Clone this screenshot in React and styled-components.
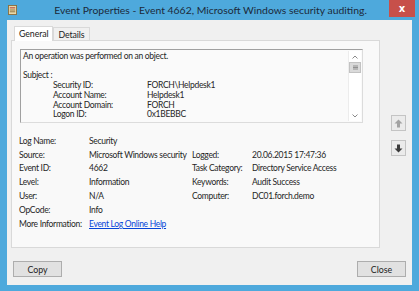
import React from 'react';
import styled, { createGlobalStyle } from 'styled-components';

const GlobalStyle = createGlobalStyle`
  html, body { margin: 0; padding: 0; background: #4ea9dc; }
  body { font-family: Lato, "Noto Sans", sans-serif; }
`;

const summary = [
  ['Security ID:', 'FORCH\\Helpdesk1'],
  ['Account Name:', 'Helpdesk1'],
  ['Account Domain:', 'FORCH'],
  ['Logon ID:', '0x1BEBBC'],
];

const fields = [
  ['Log Name:', 'Security', '', ''],
  ['Source:', 'Microsoft Windows security', 'Logged:', '20.06.2015 17:47:36'],
  ['Event ID:', '4662', 'Task Category:', 'Directory Service Access'],
  ['Level:', 'Information', 'Keywords:', 'Audit Success'],
  ['User:', 'N/A', 'Computer:', 'DC01.forch.demo'],
  ['OpCode:', 'Info', '', ''],
];

function App() {
  return (
    <Frame>
      <GlobalStyle />
      <TitleBar>
        <AppIcon viewBox="0 0 10 11">
          <rect x="0.5" y="0.5" width="9" height="10" fill="#e9d9a8" stroke="#8a6d3b" />
          <rect x="2" y="2.5" width="6" height="1.2" fill="#b2473e" />
          <rect x="2" y="5" width="6" height="1" fill="#8a6d3b" />
          <rect x="2" y="7" width="6" height="1" fill="#8a6d3b" />
        </AppIcon>
        <Title>Event Properties - Event 4662, Microsoft Windows security auditing.</Title>
        <CloseX>x</CloseX>
      </TitleBar>
      <Body>
        <Main>
          <TabArea>
            <Tabs>
              <Tab active>General</Tab>
              <Tab>Details</Tab>
            </Tabs>
            <Panel>
              <TextBox>
                <TextLines>
                  <Line>An operation was performed on an object.</Line>
                  <Line>&nbsp;</Line>
                  <Line>Subject :</Line>
                  {summary.map(([k, v]) => (
                    <SubRow key={k}>
                      <SubKey>{k}</SubKey>
                      <span>{v}</span>
                    </SubRow>
                  ))}
                </TextLines>
                <ScrollBar>
                  <ScrollArrow>
                    <svg width="6" height="4" viewBox="0 0 6 4"><path d="M0.5 3.5 L3 1 L5.5 3.5" fill="none" stroke="#8a8a8a" /></svg>
                  </ScrollArrow>
                  <Thumb>
                    <svg width="5" height="5" viewBox="0 0 5 5"><path d="M0 1h5M0 2.5h5M0 4h5" stroke="#7d7d7d" strokeWidth="0.8" /></svg>
                  </Thumb>
                  <Track />
                  <ScrollArrow>
                    <svg width="6" height="4" viewBox="0 0 6 4"><path d="M0.5 0.5 L3 3 L5.5 0.5" fill="none" stroke="#8a8a8a" /></svg>
                  </ScrollArrow>
                </ScrollBar>
              </TextBox>
              <Fields>
                {fields.map(([a, b, c, d]) => (
                  <React.Fragment key={a}>
                    <span>{a}</span>
                    <span>{b}</span>
                    <span>{c}</span>
                    <span>{d}</span>
                  </React.Fragment>
                ))}
                <span>More Information:</span>
                <Link>Event Log Online Help</Link>
              </Fields>
            </Panel>
          </TabArea>
          <Nav>
            <NavButton>
              <svg width="9" height="9" viewBox="0 0 9 9"><path d="M4.5 0.5 L8.5 4.5 L6 4.5 L6 8.5 L3 8.5 L3 4.5 L0.5 4.5 Z" fill="#a3a3a3" /></svg>
            </NavButton>
            <NavButton>
              <svg width="9" height="9" viewBox="0 0 9 9"><path d="M4.5 8.5 L8.5 4.5 L6 4.5 L6 0.5 L3 0.5 L3 4.5 L0.5 4.5 Z" fill="#3a3a3a" /></svg>
            </NavButton>
          </Nav>
        </Main>
        <Footer>
          <Button>Copy</Button>
          <Button>Close</Button>
        </Footer>
      </Body>
    </Frame>
  );
}

export default App;

const Frame = styled.div`
  width: 419px;
  height: 291px;
  display: flex;
  flex-direction: column;
  background: #4ea9dc;
  box-sizing: border-box;
  padding: 0 7px 6px 7px;
`;

const TitleBar = styled.div`
  height: 20px;
  display: flex;
  align-items: center;
  position: relative;
`;

const AppIcon = styled.svg`
  width: 9px;
  height: 10px;
  margin-left: 1px;
`;

const Title = styled.div`
  flex: 1;
  text-align: center;
  font-size: 10.4px;
  color: #1c2a3a;
  padding-right: 8px;
`;

const CloseX = styled.div`
  position: absolute;
  right: -3px;
  top: 0;
  width: 26px;
  height: 17px;
  background: #c7504a;
  color: #fff;
  font-weight: bold;
  font-size: 10px;
  display: flex;
  align-items: center;
  justify-content: center;
  font-family: "DejaVu Sans", sans-serif;
`;

const Body = styled.div`
  flex: 1;
  background: #f0f0f0;
  display: flex;
  flex-direction: column;
  padding: 5px 6px 8px 4px;
`;

const Main = styled.div`
  display: flex;
  flex: 1;
`;

const TabArea = styled.div`
  width: 369px;
  display: flex;
  flex-direction: column;
`;

const Tabs = styled.div`
  display: flex;
  align-items: flex-end;
  padding-left: 3px;
  height: 15px;
`;

const Tab = styled.div`
  font-size: 8.8px;
  letter-spacing: -0.1px;
  color: #222;
  border: 1px solid #d9d9d9;
  border-bottom: none;
  background: ${p => (p.active ? '#fff' : '#f0f0f0')};
  height: ${p => (p.active ? '15px' : '13px')};
  line-height: ${p => (p.active ? '14px' : '13px')};
  padding: 0 4px;
  margin-bottom: ${p => (p.active ? '-1px' : '0')};
  position: relative;
  z-index: ${p => (p.active ? 1 : 0)};
  box-sizing: border-box;
`;

const Panel = styled.div`
  height: 208px;
  box-sizing: border-box;
  border: 1px solid #d9d9d9;
  background: #f9f9f9;
  padding: 8px 16px 0 7px;
  font-size: 8.5px;
  letter-spacing: -0.3px;
  color: #252525;
`;

const TextBox = styled.div`
  height: 74px;
  box-sizing: border-box;
  border: 1px solid #a0a0a0;
  border-right-color: #dcdcdc;
  border-bottom-color: #dcdcdc;
  background: #fafafa;
  display: flex;
  margin-left: 1px;
`;

const TextLines = styled.div`
  flex: 1;
  padding: 2px 0 0 2px;
  line-height: 9.7px;
`;

const Line = styled.div`
  white-space: nowrap;
`;

const SubRow = styled.div`
  display: flex;
  white-space: nowrap;
`;

const SubKey = styled.span`
  width: 94px;
  padding-left: 30px;
  flex-shrink: 0;
`;

const ScrollBar = styled.div`
  width: 12px;
  display: flex;
  flex-direction: column;
  background: #fff;
  border-left: 1px solid #ececec;
  margin: 1px 1px 1px 0;
`;

const ScrollArrow = styled.div`
  height: 11px;
  display: flex;
  align-items: center;
  justify-content: center;
`;

const Thumb = styled.div`
  height: 11px;
  background: #dadada;
  border: 1px solid #c2c2c2;
  box-sizing: border-box;
  display: flex;
  align-items: center;
  justify-content: center;
`;

const Track = styled.div`
  flex: 1;
`;

const Fields = styled.div`
  display: grid;
  grid-template-columns: 70px 103px 60px 1fr;
  grid-auto-rows: 13.8px;
  margin-top: 11px;
  align-items: center;
  white-space: nowrap;
`;

const Link = styled.span`
  grid-column: 2 / 5;
  color: #0645d8;
  text-decoration: underline;
`;

const Nav = styled.div`
  flex: 1;
  display: flex;
  flex-direction: column;
  align-items: flex-end;
  padding-top: 90px;
  gap: 9px;
`;

const NavButton = styled.div`
  width: 15px;
  height: 16px;
  box-sizing: border-box;
  border: 1px solid #c4c4c4;
  background: #ebebeb;
  display: flex;
  align-items: center;
  justify-content: center;
`;

const Footer = styled.div`
  display: flex;
  justify-content: space-between;
  margin-top: 13px;
  padding-left: 2px;
`;

const Button = styled.div`
  width: 49px;
  height: 16px;
  box-sizing: border-box;
  border: 1px solid #adadad;
  background: #e1e1e1;
  font-size: 8.8px;
  color: #222;
  display: flex;
  align-items: center;
  justify-content: center;
`;
